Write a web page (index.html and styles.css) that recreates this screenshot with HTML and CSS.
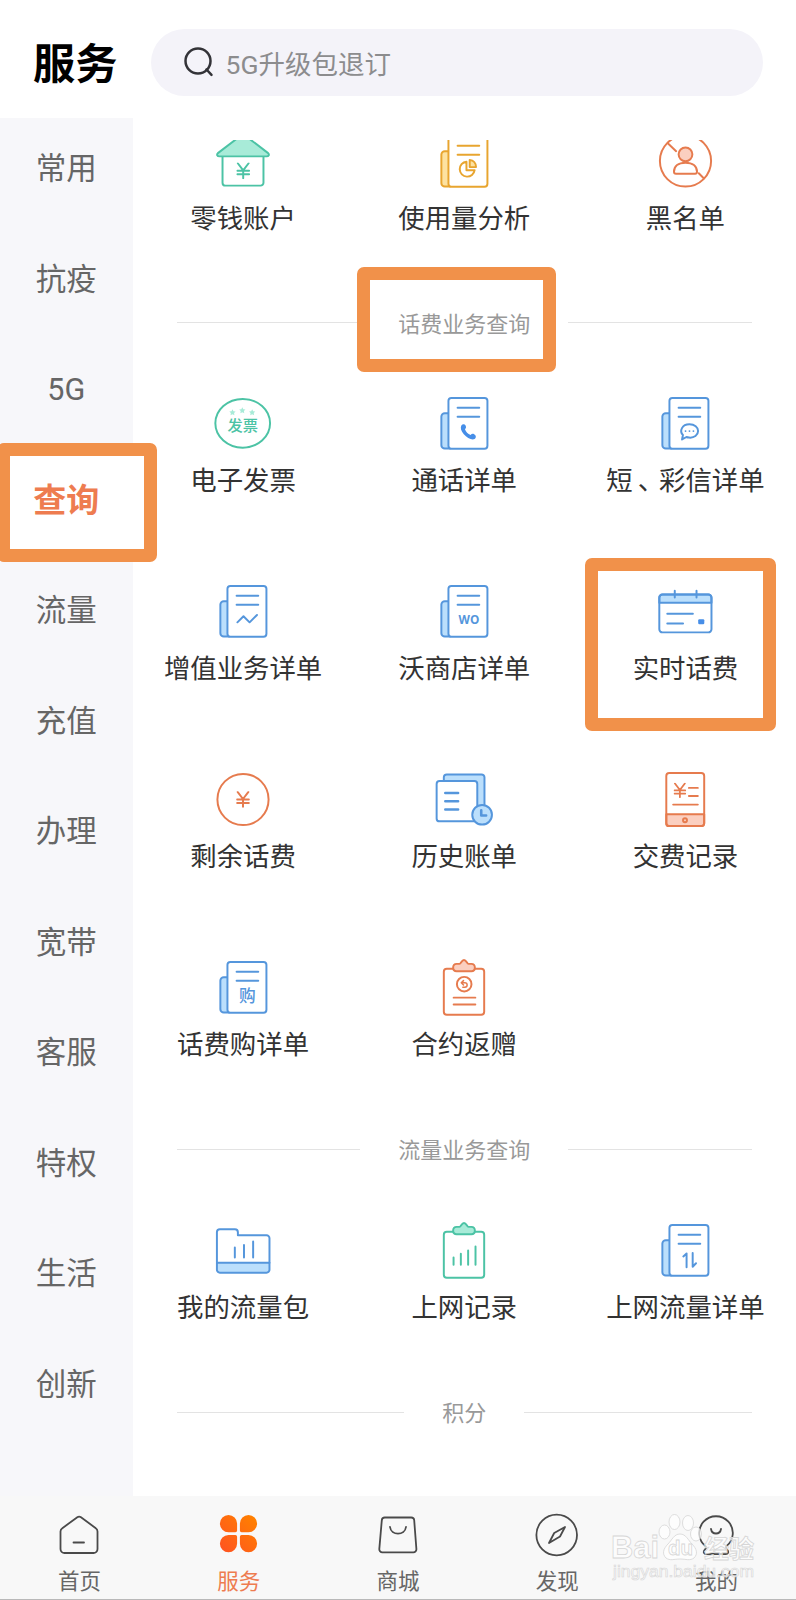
FILE: index.html
```
<!DOCTYPE html>
<html lang="zh-CN">
<head>
  <meta charset="UTF-8">
  <title>服务</title>
  <link rel="stylesheet" href="styles.css">
</head>
<body>
  <!-- shared icon parts -->
  <svg class="defs" width="0" height="0">
    <symbol id="doc" viewBox="0 0 64 64">
      <path class="tint" d="M16 21.5h-3.500a3.500 3.500 0 0 0-3.500 3.500v29a3.500 3.500 0 0 0 3.500 3.500H18"/>
      <rect class="paper" x="16.2" y="6" width="39.6" height="51.6" rx="3"/>
      <path d="M25.5 16h22M25.5 25.2h22"/>
    </symbol>
    <symbol id="clipboard" viewBox="0 0 64 64">
      <rect x="11.5" y="13" width="41" height="46.6" rx="3"/>
      <path class="tint" d="M24.5 8h3c1.500 0 2-4 4.500-4s3 4 4.500 4h3c4.700 0 4.700 7.500 0 7.500h-15c-4.700 0-4.700-7.500 0-7.500z"/>
    </symbol>
    <symbol id="yen" viewBox="0 0 14 17">
      <path d="M1.500.8L7 8l5.500-7.200M7 8v8M1 8.500h12M1 12h12"/>
    </symbol>
  </svg>

  <div class="page">
    <header class="header">
      <h1>服务</h1>
      <div class="search">
        <svg viewBox="0 0 32 32">
          <circle cx="14" cy="14" r="12.500"/>
          <path d="M22.500 22.500l5 5.300"/>
        </svg>
        <span>5G升级包退订</span>
      </div>
    </header>

    <div class="content">
      <nav class="sidebar">
        <ul>
          <li>常用</li>
          <li>抗疫</li>
          <li class="latin-item">5G</li>
          <li class="active">查询</li>
          <li>流量</li>
          <li>充值</li>
          <li>办理</li>
          <li>宽带</li>
          <li>客服</li>
          <li>特权</li>
          <li>生活</li>
          <li>创新</li>
        </ul>
      </nav>

      <main class="main">
        <div class="grid grid-top">
          <div class="cell">
            <svg class="icon green" viewBox="0 0 64 64">
              <path d="M11.200 27v26.500a3 3 0 0 0 3 3h35.600a3 3 0 0 0 3-3V27"/>
              <path class="tint" d="M6.500 23.500L32 4l25.500 19.500c1.500 1.500.7 3.300-1.500 3.300H8c-2.200 0-3-1.800-1.500-3.300z"/>
              <use href="#yen" x="25.200" y="33" width="14" height="17"/>
            </svg>
            <span>零钱账户</span>
          </div>
          <div class="cell">
            <svg class="icon yellow" viewBox="0 0 64 64">
              <use href="#doc"/>
              <path d="M34.500 32.200a7.600 7.600 0 1 0 8.300 8.600H34.500z"/>
              <path class="tint" d="M37.800 30.500v7.200h6.400c0-4.200-2.600-7-6.400-7.200z"/>
            </svg>
            <span>使用量分析</span>
          </div>
          <div class="cell">
            <svg class="icon orange" viewBox="0 0 64 64">
              <circle cx="32.500" cy="31.500" r="26"/>
              <path d="M14.500 13.500l8.500 8M46 44l5 5"/>
              <circle class="tint" cx="32.500" cy="24.700" r="7"/>
              <path d="M20.800 42.500c0-6 4.500-9.300 11.700-9.300s11.700 3.300 11.700 9.300c0 1.300-.6 2-2 2H22.800c-1.400 0-2-.7-2-2z"/>
            </svg>
            <span>黑名单</span>
          </div>
        </div>

        <div class="divider"><span>话费业务查询</span></div>

        <div class="grid">
          <div class="cell">
            <svg class="icon green" viewBox="0 0 64 64">
              <ellipse cx="31.700" cy="31.800" rx="27.800" ry="24.800"/>
              <g class="stars">
                <path id="star" d="M21.300 17.500l1 2 2.200.3-1.600 1.600.4 2.200-2-1-2 1 .4-2.200-1.600-1.600 2.200-.3z"/>
                <use href="#star" x="10" y="-2"/>
                <use href="#star" x="20"/>
              </g>
              <text x="31.700" y="39.600" font-size="15.500">发票</text>
            </svg>
            <span>电子发票</span>
          </div>
          <div class="cell">
            <svg class="icon blue" viewBox="0 0 64 64">
              <use href="#doc"/>
              <path class="solid" d="M29.300 34c1.300-1.700 3.800-1.500 4.600.7.500 1.400-.2 2.300-1 3 1 2.900 3 5 5.800 6 1-1.200 2.300-1.500 3.600-.8 2.200 1.200 2.300 3.600.5 4.800-2.500 1.500-7.700-.7-11-4.700-2.900-3.500-3.700-7-2.500-9z"/>
            </svg>
            <span>通话详单</span>
          </div>
          <div class="cell">
            <svg class="icon blue" viewBox="0 0 64 64">
              <use href="#doc"/>
              <path d="M29 48.200l.9-4.500c-3.900-4.200-.9-10.900 6.600-10.900 5.200 0 8.800 2.900 8.800 6.900s-4 7.200-9.300 6.600c-1-.1-1.700-.3-2.500-.6z"/>
              <path class="dots" d="M32.500 39.700h.1M36.500 39.700h.1M40.500 39.700h.1"/>
            </svg>
            <span>短<i class="comma">、</i>彩信详单</span>
          </div>
          <div class="cell">
            <svg class="icon blue" viewBox="0 0 64 64">
              <use href="#doc"/>
              <path d="M26.300 43l6.200-6.200 6.200 6.200 7.500-7.500"/>
            </svg>
            <span>增值业务详单</span>
          </div>
          <div class="cell">
            <svg class="icon blue" viewBox="0 0 64 64">
              <use href="#doc"/>
              <text class="latin" x="37" y="44.400" font-size="12">WO</text>
            </svg>
            <span>沃商店详单</span>
          </div>
          <div class="cell">
            <svg class="icon blue" viewBox="0 0 64 64">
              <path class="tint" d="M5.900 23V18a3.200 3.200 0 0 1 3.200-3.200h46.600a3.200 3.200 0 0 1 3.200 3.200v5z"/>
              <rect x="5.900" y="14.800" width="53" height="38.400" rx="3.200"/>
              <path d="M21.600 10.800v7M43.700 10.800v7M14 34.300h26M14 44.200h16"/>
              <rect class="solid" x="45.400" y="39.800" width="6.200" height="5.200" rx="1.200"/>
            </svg>
            <span>实时话费</span>
          </div>
          <div class="cell">
            <svg class="icon orange" viewBox="0 0 64 64">
              <circle cx="32" cy="32" r="26"/>
              <use href="#yen" x="25" y="23.500" width="14" height="17"/>
            </svg>
            <span>剩余话费</span>
          </div>
          <div class="cell">
            <svg class="icon blue" viewBox="0 0 64 64">
              <path class="tint" d="M11.500 13V9.500a3 3 0 0 1 3-3h35.300a3 3 0 0 1 3 3V47H45z"/>
              <rect class="paper" x="4.200" y="13.200" width="41.300" height="41" rx="3"/>
              <path class="thick" d="M13 25.300h13M13 33.700h13M13 42.200h13"/>
              <circle class="tint" cx="50.400" cy="47.500" r="10"/>
              <path class="thick" d="M49.500 43v5.200h5"/>
            </svg>
            <span>历史账单</span>
          </div>
          <div class="cell">
            <svg class="icon orange" viewBox="0 0 64 64">
              <path class="tint" d="M13 47h38.500v9a3 3 0 0 1-3 3H16a3 3 0 0 1-3-3z"/>
              <rect x="13" y="5" width="38.500" height="54" rx="3"/>
              <use href="#yen" x="20.300" y="15" width="13" height="15.500"/>
              <path d="M36 20.200h9M36 28.500h9M20 37.200h25"/>
              <circle cx="32" cy="53" r="2"/>
            </svg>
            <span>交费记录</span>
          </div>
          <div class="cell">
            <svg class="icon blue" viewBox="0 0 64 64">
              <use href="#doc"/>
              <text x="36.500" y="46.800" font-size="17">购</text>
            </svg>
            <span>话费购详单</span>
          </div>
          <div class="cell">
            <svg class="icon orange" viewBox="0 0 64 64">
              <use href="#clipboard"/>
              <circle cx="32.200" cy="28.600" r="7.400"/>
              <path class="thin" d="M31.500 25l-2.300 2.200 2.300 2.200M29.500 27.200h3.300c3.200 0 3.200 4.500 0 4.500h-2"/>
              <path d="M21.500 42.300h22M21.500 49.300h22"/>
            </svg>
            <span>合约返赠</span>
          </div>
        </div>

        <div class="divider divider-mid"><span>流量业务查询</span></div>

        <div class="grid">
          <div class="cell">
            <svg class="icon blue" viewBox="0 0 64 64">
              <path class="tint" d="M5.500 44.500h53.400v7a3 3 0 0 1-3 3H8.500a3 3 0 0 1-3-3z"/>
              <path d="M5.500 44.500V13.500a3 3 0 0 1 3-3h15.300a3 3 0 0 1 3 3v3h29.100a3 3 0 0 1 3 3v25"/>
              <path d="M23.700 29v10M33 26.500V39M42.300 22.800V39"/>
            </svg>
            <span>我的流量包</span>
          </div>
          <div class="cell">
            <svg class="icon green" viewBox="0 0 64 64">
              <use href="#clipboard"/>
              <path d="M21.400 39v7.500M28.800 35.300v11.200M36.200 32v14.500M43.700 28v18.500"/>
            </svg>
            <span>上网记录</span>
          </div>
          <div class="cell">
            <svg class="icon blue" viewBox="0 0 64 64">
              <use href="#doc"/>
              <path d="M30.300 38l3.300-3v14M39.800 34.500v14l3.400-3.500"/>
            </svg>
            <span>上网流量详单</span>
          </div>
        </div>

        <div class="divider divider-mid"><span>积分</span></div>
      </main>
    </div>

    <footer class="tabbar">
      <div class="tab">
        <svg viewBox="0 0 44 44">
          <path d="M2.500 18.500c0-1.500.5-2.500 1.800-3.300L19.300 4.300c1.300-.9 2.400-.9 3.700 0l14.800 10.900c1.200.8 1.700 1.800 1.700 3.300V36a4 4 0 0 1-4 4h-29a4 4 0 0 1-4-4z"/>
          <path d="M15.500 29.500H26"/>
        </svg>
        <span>首页</span>
      </div>
      <div class="tab active">
        <svg viewBox="0 0 44 44">
          <defs>
            <linearGradient id="clover" gradientUnits="userSpaceOnUse" x1="5" y1="38" x2="38" y2="5">
              <stop offset="0" stop-color="#ff5420"/>
              <stop offset="1" stop-color="#ff8000"/>
            </linearGradient>
          </defs>
          <g class="petals">
            <path d="M11.500 2a8.600 8.600 0 0 1 8.600 8.600v6.900a1.700 1.700 0 0 1-1.700 1.700h-6.900a8.600 8.600 0 0 1 0-17.200z"/>
            <path d="M31.500 2a8.600 8.600 0 0 1 0 17.200h-6.900a1.700 1.700 0 0 1-1.700-1.700v-6.900A8.600 8.600 0 0 1 31.500 2z"/>
            <path d="M11.500 39.200a8.600 8.600 0 0 1 0-17.200h6.900a1.700 1.700 0 0 1 1.700 1.700v6.900a8.600 8.600 0 0 1-8.600 8.600z"/>
            <path d="M31.500 39.200a8.600 8.600 0 0 1-8.600-8.600v-6.900a1.700 1.700 0 0 1 1.700-1.700h6.900a8.600 8.600 0 0 1 0 17.200z"/>
          </g>
        </svg>
        <span>服务</span>
      </div>
      <div class="tab">
        <svg viewBox="0 0 44 44">
          <path d="M8.800 4.500h26.400a3 3 0 0 1 3 2.800l2.200 28.800a3 3 0 0 1-3 3.200H6.300a3 3 0 0 1-3-3.200L5.800 7.300a3 3 0 0 1 3-2.800z"/>
          <path d="M14 14c1.200 8.800 14.800 8.800 16 0"/>
        </svg>
        <span>商城</span>
      </div>
      <div class="tab">
        <svg viewBox="0 0 44 44">
          <circle cx="21.700" cy="22" r="20.300"/>
          <path d="M30 14l-5 9.500-11 6.500 5.200-10z"/>
        </svg>
        <span>发现</span>
      </div>
      <div class="tab">
        <svg viewBox="0 0 44 44">
          <path d="M11.800 33.400A16.800 16.800 0 1 1 32.200 33.400c-.8 1.600.2 2.600 1.300 3.800 1.500 1.800.5 3.800-1.700 3.800H12.200c-2.200 0-3.200-2-1.700-3.800 1.100-1.200 2.100-2.200 1.300-3.800z"/>
          <path d="M17 16c1 6 9 6 10 0"/>
        </svg>
        <span>我的</span>
      </div>
    </footer>

    <!-- highlight boxes -->
    <div class="mark mark-title"></div>
    <div class="mark mark-menu"></div>
    <div class="mark mark-fee"></div>

    <svg class="watermark" viewBox="0 0 150 72">
      <g>
        <ellipse cx="58.500" cy="23" rx="5.500" ry="7"/>
        <ellipse cx="68.500" cy="13" rx="5.500" ry="7.500"/>
        <ellipse cx="82" cy="14" rx="5.500" ry="7.500"/>
        <ellipse cx="90" cy="25" rx="5.500" ry="7"/>
        <path d="M74 25c6 0 8 6 12 10 5 5 6 10 2 14-4 3-8 1-14 1s-10 2-14-1c-4-4-3-9 2-14 4-4 6-10 12-10z"/>
      </g>
      <text class="wm-big" x="5" y="49" font-size="32" textLength="48" lengthAdjust="spacingAndGlyphs">Bai</text>
      <text class="wm-big" x="62" y="46" font-size="21" textLength="25" lengthAdjust="spacingAndGlyphs">du</text>
      <text class="wm-big" x="98" y="49" font-size="25" textLength="50">经验</text>
      <text class="wm-url" x="7" y="68" font-size="16.500" textLength="141" lengthAdjust="spacingAndGlyphs">jingyan.baidu.com</text>
    </svg>
  </div>
</body>
</html>
```
FILE: styles.css
```
:root {
  --blue: #5596dc;
  --blue-tint: #bbdffc;
  --green: #4cc3a5;
  --green-tint: #a8ebd8;
  --orange: #e67b4e;
  --orange-tint: #fbcfc0;
  --yellow: #e8a52f;
  --yellow-tint: #fde2a0;
  --mark: #f1914a;
  --text: #333;
}

* {
  box-sizing: border-box;
}

body {
  margin: 0;
  width: 796px;
  height: 1600px;
  overflow: hidden;
  background: #fff;
  color: var(--text);
  font-family: Roboto, "Noto Sans CJK SC", sans-serif;
}

.defs {
  position: absolute;
}

.page {
  position: relative;
  display: flex;
  flex-direction: column;
  height: 1600px;
  overflow: hidden;
}

/* header */
.header {
  display: flex;
  flex: none;
  height: 118px;
  padding: 29px 33px 0 33px;
}

.header h1 {
  margin: 0;
  width: 117.5px;
  font-size: 42.2px;
  font-weight: 700;
  line-height: 72px;
  color: #000;
}

.search {
  flex: 1;
  display: flex;
  align-items: center;
  gap: 10px;
  height: 67px;
  padding-left: 33px;
  border-radius: 34px;
  background: #f4f3f9;
  font-size: 26.5px;
  color: #8c8c8e;
}

.search svg {
  width: 32px;
  height: 32px;
  fill: none;
  stroke: #333338;
  stroke-width: 2.5;
  stroke-linecap: round;
}

/* body */
.content {
  display: flex;
  height: 1378px;
}

.sidebar {
  flex: none;
  width: 132.5px;
  overflow: hidden;
  background: #f7f7fa;
}

.sidebar ul {
  margin: -5px 0 0;
  padding: 0;
  list-style: none;
}

.sidebar li {
  display: flex;
  align-items: center;
  justify-content: center;
  height: 110.5px;
  padding-bottom: 4px;
  font-size: 30.5px;
  color: #666;
}

.sidebar li.latin-item {
  padding-bottom: 0;
}

.sidebar li.active {
  background: #fff;
  font-size: 33px;
  font-weight: 700;
  color: #ee7c50;
}

.main {
  flex: 1;
  margin-top: 22px;
  overflow: hidden;
}

.grid {
  display: grid;
  grid-template-columns: repeat(3, 1fr);
  row-gap: 81px;
}

.grid-top {
  margin-top: -10px;
}

.cell {
  display: flex;
  flex-direction: column;
  align-items: center;
  gap: 8px;
  height: 107px;
  font-size: 26.4px;
  line-height: 36px;
  white-space: nowrap;
}

.comma {
  padding-left: 5px;
  margin-right: -5px;
  font-style: normal;
}

.divider {
  display: flex;
  align-items: center;
  gap: 38px;
  height: 155px;
  padding: 16px 44px 0;
  font-size: 22px;
  color: #999;
}

.divider-mid {
  height: 156px;
}

.divider span {
  padding-bottom: 2px;
}

.divider::before,
.divider::after {
  content: '';
  flex: 1;
  height: 1px;
  background: #e3e3e3;
}

/* icons */
.icon {
  width: 64px;
  height: 64px;
  fill: none;
  stroke: currentColor;
  stroke-width: 2;
  stroke-linecap: round;
  stroke-linejoin: round;
}

.blue { color: var(--blue); --tint: var(--blue-tint); }
.green { color: var(--green); --tint: var(--green-tint); }
.orange { color: var(--orange); --tint: var(--orange-tint); }
.yellow { color: var(--yellow); --tint: var(--yellow-tint); }

.tint { fill: var(--tint); }
.paper { fill: #fff; }
.solid { fill: #468ee8; stroke: none; }
.thick { stroke-width: 2.6; }
.thin { stroke-width: 1.5; }
.dots { stroke-width: 1.8; }
.stars { fill: var(--tint); stroke: none; }

.icon text {
  fill: currentColor;
  stroke: none;
  font-weight: 500;
  text-anchor: middle;
}

.icon .latin {
  font-family: "Open Sans", sans-serif;
  font-weight: 700;
}

/* bottom tabs */
.tabbar {
  display: flex;
  height: 104px;
  background: #f8f8f8;
  border-bottom: 1px solid #b9b9b9;
}

.tab {
  flex: 1;
  display: flex;
  flex-direction: column;
  align-items: center;
  gap: 10px;
  padding-top: 17px;
  font-size: 21.5px;
  line-height: 30px;
  color: #666;
}

.tab svg {
  width: 44px;
  height: 44px;
  fill: none;
  stroke: #4a4a4a;
  stroke-width: 1.8;
  stroke-linecap: round;
  stroke-linejoin: round;
}

.tab .petals {
  fill: url(#clover);
  stroke: none;
}

.tab.active {
  color: #ee7c50;
}

/* overlays */
.mark {
  position: absolute;
  border: 13px solid var(--mark);
  border-radius: 7px;
}

.mark-title {
  left: 357px;
  top: 267px;
  width: 199px;
  height: 105px;
}

.mark-menu {
  left: -3px;
  top: 443px;
  width: 160px;
  height: 119px;
}

.mark-fee {
  left: 585px;
  top: 558px;
  width: 191px;
  height: 173px;
}

.watermark {
  position: absolute;
  left: 606px;
  top: 1509px;
  width: 150px;
  height: 72px;
  fill: rgba(255, 255, 255, 0.7);
  stroke: #d6d6d6;
  stroke-width: 0.8;
  font-family: "Liberation Sans", "Noto Sans CJK SC", sans-serif;
}

.wm-big {
  font-weight: 700;
}

.wm-url {
  stroke-width: 0.6;
}
```
